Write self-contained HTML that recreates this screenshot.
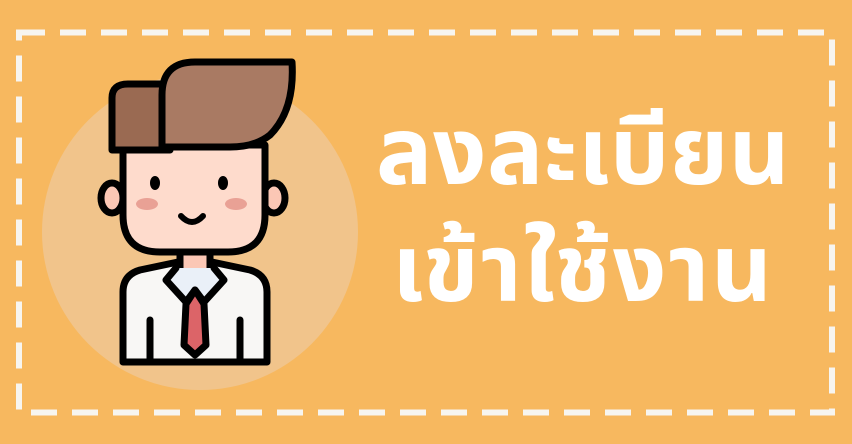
<!DOCTYPE html>
<html><head><meta charset="utf-8"><style>
html,body{margin:0;padding:0}
body{width:852px;height:444px;background:#f7b85f;position:relative;overflow:hidden;font-family:"Liberation Sans","Noto Sans Thai","Tlwg Typist",sans-serif}
.t{position:absolute;color:#fff;font-size:94px;font-weight:bold;line-height:1;white-space:nowrap;letter-spacing:0.5px}
</style></head><body>
<svg width="852" height="444" style="position:absolute;left:0;top:0">
<rect x="19" y="32.5" width="813" height="380" fill="none" stroke="#f7f5f0" stroke-width="6" stroke-dasharray="26 15"/>
<circle cx="200" cy="232" r="158" fill="#f1c48b"/>
<g stroke="#000" stroke-width="7" stroke-linejoin="round" stroke-linecap="round">
<path d="M123 362 V292 Q123 275 140 270 L178 262 H212 L250 270 Q267 275 267 292 V362 Z" fill="#f8f7f5"/>
<path d="M180 248 V272 Q195 285 210 272 V248 Z" fill="#fbc7b5"/>
<path d="M176 268 L166 280 L186 302 L195 290 L204 302 L224 280 L214 268" fill="#eaf0f8"/>
<path d="M195 290 L186 304 L184 345 L195 355 L206 345 L204 304 Z" fill="#dc6468"/>
<path d="M150 320 V362 M240 320 V362" fill="none"/>
<ellipse cx="112" cy="198" rx="11" ry="15" fill="#fbc7b5"/>
<ellipse cx="274" cy="198" rx="11" ry="15" fill="#fbc7b5"/>
<path d="M123 145 H265 V215 Q265 252 228 252 H160 Q123 252 123 215 Z" fill="#fedbcc"/>
<path d="M112 150 V98 Q112 84 128 84 H170 V150 Z" fill="#9a6a52"/>
<path d="M162 145 V95 Q162 62 195 62 H292 Q295 110 270 135 Q255 147 230 147 H162 Z" fill="#a97a63"/>
</g>
<ellipse cx="155" cy="183" rx="5" ry="7" fill="#000"/>
<ellipse cx="223" cy="183" rx="5" ry="7" fill="#000"/>
<ellipse cx="147" cy="204" rx="11" ry="6" fill="#e9a195"/>
<ellipse cx="236" cy="204" rx="11" ry="6" fill="#e9a195"/>
<path d="M181 216 Q192 228 203 216" fill="none" stroke="#000" stroke-width="6" stroke-linecap="round"/>
</svg>
<div class="t" style="left:376px;top:105px">ลงละเบียน</div>
<div class="t" style="left:392px;top:222px;letter-spacing:2px">เข้าใช้งาน</div>
</body></html>
